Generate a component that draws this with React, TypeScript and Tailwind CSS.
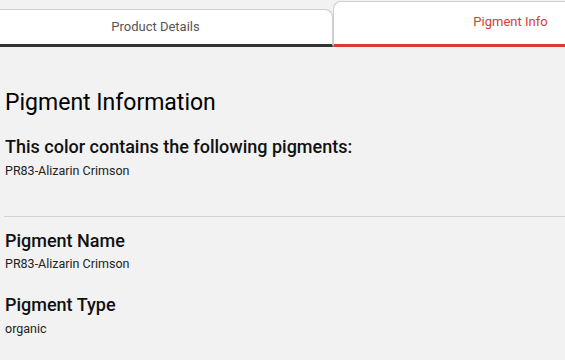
import React from "react";

export default function App() {
  return (
    <div className="h-[360px] w-[565px] overflow-hidden bg-[#f2f2f2] font-['Roboto',sans-serif]">
      {/* Tabs */}
      <div className="flex h-[47px] items-end overflow-hidden">
        <div className="-ml-[21px] flex shrink-0 items-end">
          <div className="flex h-[38px] w-[354px] shrink-0 items-center justify-center rounded-tr-lg border-t border-r border-b-[3px] border-[#cfcfcf] border-b-[#333333] bg-white text-[13px] text-[#555555]">
            Product Details
          </div>
          <div className="flex h-[46px] w-[354px] shrink-0 items-center justify-center rounded-tl-lg border-t border-l border-b-[3px] border-[#cfcfcf] border-b-[#d93a35] bg-white pb-[2px] text-[13px] text-[#d93a35]">
            Pigment Info
          </div>
        </div>
      </div>

      {/* Content */}
      <div className="pt-[43px]">
        <div className="px-[5px]">
          <h1 className="text-[23px] leading-[26px] text-black">Pigment Information</h1>
          <h2 className="mt-[21px] text-[18px] leading-[20px] font-medium text-[#111111]">
            This color contains the following pigments:
          </h2>
          <p className="mt-[7px] text-[12.5px] leading-[14px] text-[#222222]">PR83-Alizarin Crimson</p>
        </div>

        <div className="mt-[38px] ml-[4px] h-px bg-[#d4d4d4]" />

        <div className="px-[5px]">
          <h2 className="mt-[14px] text-[18px] leading-[20px] font-medium text-[#111111]">Pigment Name</h2>
          <p className="mt-[6px] text-[12.5px] leading-[14px] text-[#222222]">PR83-Alizarin Crimson</p>
          <h2 className="mt-[24px] text-[18px] leading-[20px] font-medium text-[#111111]">Pigment Type</h2>
          <p className="mt-[7px] text-[12.5px] leading-[14px] text-[#222222]">organic</p>
        </div>
      </div>
    </div>
  );
}
